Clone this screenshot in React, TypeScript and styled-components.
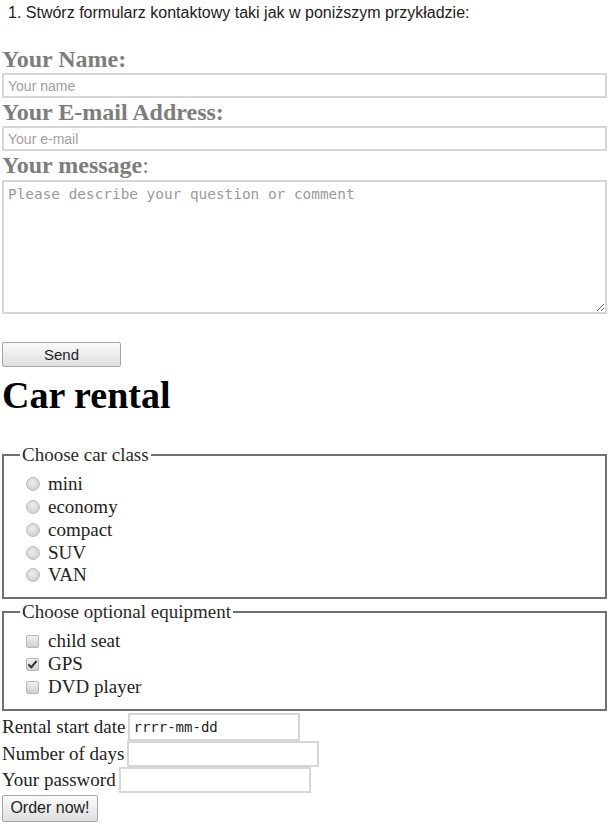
import React from 'react'
import styled, { createGlobalStyle } from 'styled-components'

const GlobalStyle = createGlobalStyle`
    body {
        margin: 0;
        background: #fff;
        font-family: "Liberation Serif", "Times New Roman", serif;
        color: #222;
    }
`

const Page = styled.div`
    padding: 0 6px 0 2px;
`

const Task = styled.p`
    margin: 0;
    padding: 3px 6px 0;
    height: 45px;
    box-sizing: border-box;
    font-family: "Liberation Sans", Arial, sans-serif;
    font-size: 16px;
    line-height: 19px;
    color: #222;
`

const FieldLabel = styled.div`
    font-size: 24px;
    line-height: 28px;
    font-weight: bold;
    color: #7d7d7d;
`

const Plain = styled.span`
    font-weight: normal;
`

const TextInput = styled.input`
    display: block;
    box-sizing: border-box;
    width: 100%;
    height: 25px;
    margin: 0;
    padding: 0 4px;
    border: 2px solid #d6d6d6;
    font-family: "Liberation Sans", Arial, sans-serif;
    font-size: 14px;
    color: #333;
    outline: none;
    &::placeholder {
        color: #a0a0a0;
    }
`

const Message = styled.textarea`
    display: block;
    box-sizing: border-box;
    width: 100%;
    height: 134px;
    margin: 1px 0 0;
    padding: 4px 4px;
    border: 2px solid #d6d6d6;
    font-family: "DejaVu Sans Mono", "Liberation Mono", monospace;
    font-size: 14.4px;
    line-height: 17px;
    color: #333;
    outline: none;
    &::placeholder {
        color: #9a9a9a;
    }
`

const Button = styled.button<{ $w: number; $h: number; $size: number }>`
    display: block;
    box-sizing: border-box;
    width: ${p => p.$w}px;
    height: ${p => p.$h}px;
    padding: 0;
    border: 1px solid #a6a6a6;
    border-radius: 2px;
    background: linear-gradient(#fafafa, #dedede);
    font-family: "Liberation Sans", Arial, sans-serif;
    font-size: ${p => p.$size}px;
    color: #222;
`

const SendButton = styled(Button)`
    margin-top: 28px;
`

const Title = styled.h1`
    margin: 6px 0 27px;
    font-size: 38px;
    line-height: 44px;
    font-weight: bold;
    color: #000;
`

const Group = styled.fieldset`
    margin: 0 0 2px;
    padding: 7px 16px 10px;
    border: 2px solid #707070;
`

const Legend = styled.legend`
    padding: 0 2px;
    font-size: 19px;
    line-height: 22px;
    color: #2a2a2a;
`

const Option = styled.label<{ $h: number }>`
    display: flex;
    align-items: center;
    height: ${p => p.$h}px;
    font-size: 19px;
    color: #222;
`

const Radio = styled.input`
    appearance: none;
    box-sizing: border-box;
    width: 14px;
    height: 14px;
    margin: 0 8px 0 6px;
    border: 1px solid #bcbcbc;
    border-radius: 50%;
    background: radial-gradient(circle at 45% 40%, #eeeeee 0%, #d2d2d2 70%, #c6c6c6 100%);
`

const Check = styled.input`
    appearance: none;
    position: relative;
    box-sizing: border-box;
    width: 13px;
    height: 13px;
    margin: 0 9px 0 6px;
    border: 1px solid #b8b8b8;
    border-radius: 2px;
    background: linear-gradient(#f0f0f0, #cfcfcf);
    &:checked::after {
        content: "";
        position: absolute;
        left: 3px;
        top: 0px;
        width: 3px;
        height: 7px;
        border: solid #333;
        border-width: 0 2px 2px 0;
        transform: rotate(40deg);
    }
`

const Row = styled.div<{ $h: number }>`
    display: flex;
    align-items: center;
    gap: 3px;
    height: ${p => p.$h}px;
    font-size: 19px;
    color: #222;
`

const SmallInput = styled.input<{ $w: number; $h: number }>`
    box-sizing: border-box;
    width: ${p => p.$w}px;
    height: ${p => p.$h}px;
    margin: 0;
    padding: 0 3px;
    border: 2px solid #d6d6d6;
    font-family: "DejaVu Sans Mono", "Liberation Mono", monospace;
    font-size: 14px;
    color: #222;
    outline: none;
`

const OrderButton = styled(Button)`
    margin-top: 2px;
`

const classes = ['mini', 'economy', 'compact', 'SUV', 'VAN']

const extras = [
    { name: 'child seat', checked: false },
    { name: 'GPS', checked: true },
    { name: 'DVD player', checked: false },
]

const App = () => {
    return (
        <Page>
            <GlobalStyle />
            <Task>1. Stwórz formularz kontaktowy taki jak w poniższym przykładzie:</Task>

            <FieldLabel>Your Name:</FieldLabel>
            <TextInput placeholder="Your name" />
            <FieldLabel>Your E-mail Address:</FieldLabel>
            <TextInput placeholder="Your e-mail" />
            <FieldLabel>Your message<Plain>:</Plain></FieldLabel>
            <Message placeholder="Please describe your question or comment" />
            <SendButton $w={119} $h={25} $size={15}>Send</SendButton>

            <Title>Car rental</Title>

            <Group>
                <Legend>Choose car class</Legend>
                {classes.map(c => (
                    <Option key={c} $h={22.75}>
                        <Radio type="radio" name="carClass" />
                        {c}
                    </Option>
                ))}
            </Group>

            <Group>
                <Legend>Choose optional equipment</Legend>
                {extras.map(e => (
                    <Option key={e.name} $h={23}>
                        <Check type="checkbox" defaultChecked={e.checked} />
                        {e.name}
                    </Option>
                ))}
            </Group>

            <Row $h={28}>
                Rental start date
                <SmallInput $w={172} $h={28} defaultValue="rrrr-mm-dd" readOnly />
            </Row>
            <Row $h={26}>
                Number of days
                <SmallInput $w={192} $h={26} />
            </Row>
            <Row $h={26}>
                Your password
                <SmallInput $w={192} $h={26} type="password" />
            </Row>
            <OrderButton $w={96} $h={27} $size={16}>Order now!</OrderButton>
        </Page>
    )
}

export default App
